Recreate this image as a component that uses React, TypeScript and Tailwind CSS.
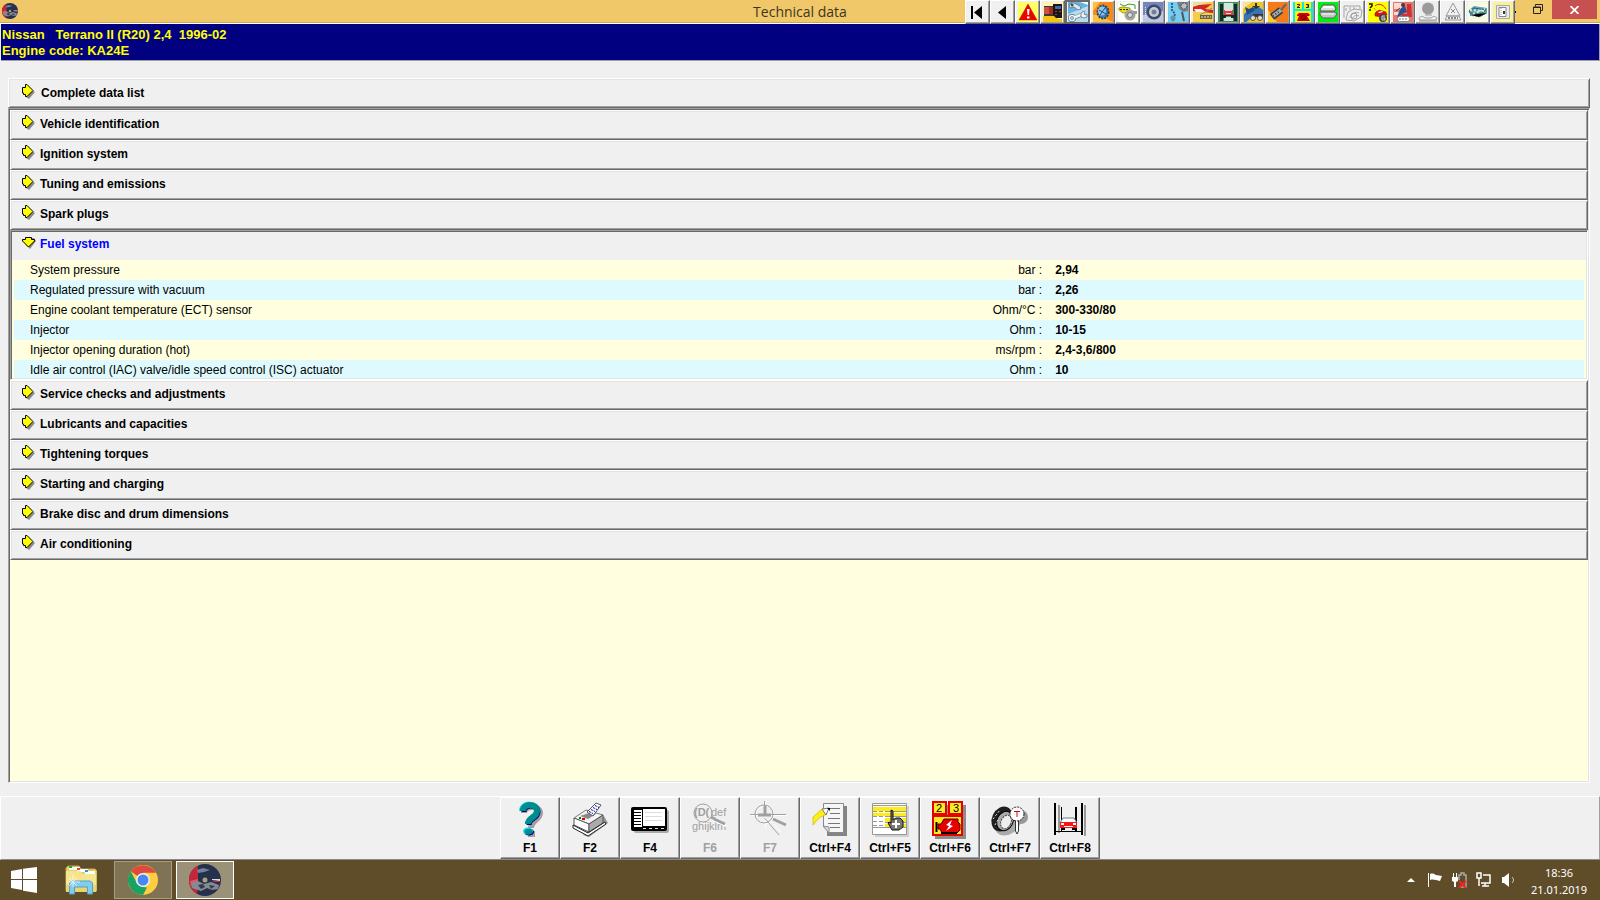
import { useState } from "react";
import type { ReactNode } from "react";

type ToolProps = { name: string; icon: ReactNode };
type ActionProps = { label: string; name: string; icon: ReactNode; disabled?: boolean };
type DataRow = { label: string; unit: string; value: string };

const sections = [
  "Vehicle identification",
  "Ignition system",
  "Tuning and emissions",
  "Spark plugs",
  "Fuel system",
  "Service checks and adjustments",
  "Lubricants and capacities",
  "Tightening torques",
  "Starting and charging",
  "Brake disc and drum dimensions",
  "Air conditioning",
];

const fuelRows: DataRow[] = [
  { label: "System pressure", unit: "bar :", value: "2,94" },
  { label: "Regulated pressure with vacuum", unit: "bar :", value: "2,26" },
  { label: "Engine coolant temperature (ECT) sensor", unit: "Ohm/°C :", value: "300-330/80" },
  { label: "Injector", unit: "Ohm :", value: "10-15" },
  { label: "Injector opening duration (hot)", unit: "ms/rpm :", value: "2,4-3,6/800" },
  { label: "Idle air control (IAC) valve/idle speed control (ISC) actuator", unit: "Ohm :", value: "10" },
];

// Two-pixel bevels: the border is the outer line, the inset shadow the inner one
const raised =
  "border border-t-white border-l-white border-r-[#696969] border-b-[#696969] p-px shadow-[inset_1px_1px_0_#e3e3e3,inset_-1px_-1px_0_#a0a0a0]";
const sunken =
  "border border-t-[#a0a0a0] border-l-[#a0a0a0] border-r-white border-b-white p-px shadow-[inset_1px_1px_0_#696969,inset_-1px_-1px_0_#e3e3e3]";

// 20x20 pictures for the buttons in the title bar
const tools: ToolProps[] = [
  { name: "First", icon: <path d="M3 4h2v13H3zM14 4v13L6 10.500z" /> },
  { name: "Previous", icon: <path d="M13 4v13L5 10.500z" /> },
  {
    name: "Warning",
    icon: (
      <>
        <path fill="#ffff66" d="M0 0h20v20H0z" />
        <path fill="#f00000" stroke="#a02000" strokeWidth=".5" d="M10 2l9 16H1z" />
        <path fill="#fff" d="M9 7h2.500l-.5 6H9.500zM9 14.500h2.500v2H9z" />
      </>
    ),
  },
  {
    name: "Diagnostic unit",
    icon: (
      <>
        <path fill="#fff3b0" d="M0 0h20v20H0z" />
        <path fill="#f6c416" d="M0 14h12l3 3h4v3H0z" />
        <path fill="#3a3a3a" d="M1 4h9v1H1zM1 12h10v2H1z" />
        <path fill="#a82c20" d="M1 5h9v7H1z" />
        <path fill="#d0503c" d="M1 5h5v7H1z" />
        <path fill="#16181c" d="M10 2h9v14h-6l-3-3z" />
        <path fill="#3a6cac" d="M12 4h6v3h-6z" />
        <path fill="#c23028" d="M12 9h2v1h-2zM16 9h2v1h-2zM12 12h2v1h-2z" />
      </>
    ),
  },
  {
    name: "Technical data",
    icon: (
      <>
        <path fill="#65b4e4" d="M0 0h20v20H0z" />
        <path fill="#b6ddf2" d="M0 20V12l20-8v16z" />
        <path fill="#f4fafc" d="M12 0h8v3z" />
        <path fill="#dfe8ea" stroke="#5d7480" strokeWidth=".8" d="M1 2l3-2 8 4 1 3-3 1-4-3-4 1z" />
        <path fill="#3f5661" d="M2 2l2-1 2 2-2 2z" />
        <path fill="none" stroke="#5d7480" strokeWidth="4" d="M5 16l8-3" />
        <circle cx="4" cy="16" r="2.500" fill="none" stroke="#5d7480" strokeWidth="3" />
        <circle cx="4" cy="16" r="2.500" fill="none" stroke="#eef3f4" strokeWidth="1.500" />
        <path fill="none" stroke="#eef3f4" strokeWidth="2.500" d="M6 15.500l8-3" />
        <path fill="#eef3f4" stroke="#5d7480" strokeWidth=".8" d="M13 11l3-2 1 1-1 2 1 1 2-1v3l-3 1-3-1z" />
      </>
    ),
  },
  {
    name: "Timing belts",
    icon: (
      <>
        <path fill="#f98c16" d="M0 0h20v20H0z" />
        <path fill="#ffc040" d="M0 0h7L0 9zM0 13h7l13 7H0z" />
        <ellipse cx="10" cy="10" rx="5.500" ry="6.500" fill="#3b7abc" stroke="#234669" strokeWidth="2" strokeDasharray="2 1" />
        <ellipse cx="9" cy="9" rx="4" ry="4.500" fill="#8ec4e6" />
        <path stroke="#234f84" d="M6 8l7 4M7 13l5-7" />
      </>
    ),
  },
  {
    name: "Engine management",
    icon: (
      <>
        <path fill="#fffff2" d="M0 0h20v20H0z" />
        <path fill="none" stroke="#389342" d="M2 2l4 2 5-2 6 1v4" />
        <path fill="#eee500" stroke="#77740a" strokeWidth=".7" d="M1 6l3-1 8 1v4l-7 1-4-3z" />
        <path stroke="#222" strokeDasharray="2 1" d="M2 7.500h9" />
        <circle cx="12" cy="13" r="5.500" fill="#a5a5a5" />
        <circle cx="12" cy="13" r="2.500" fill="#ddd" stroke="#777" />
        <path fill="#999" d="M15 9h4v3h-3z" />
      </>
    ),
  },
  {
    name: "Wheels",
    icon: (
      <>
        <path fill="#7486be" d="M0 0h20v20H0z" />
        <path fill="#bdc7e6" d="M0 13l20-4v11H0z" />
        <circle cx="11" cy="10" r="7.500" fill="#3e4a64" />
        <circle cx="11" cy="10" r="5" fill="#c7ccd6" />
        <circle cx="11" cy="10" r="2.500" fill="#747f99" />
        <path stroke="#e4e8ee" strokeDasharray="1 1" d="M2.500 5v12" />
      </>
    ),
  },
  {
    name: "Camshaft drive",
    icon: (
      <>
        <path fill="#77ccef" d="M0 0h20v20H0z" />
        <path fill="#777f86" d="M9 0h11v9l-5 1-4-3z" />
        <circle cx="16" cy="4" r="3" fill="#bac1c4" stroke="#475159" strokeDasharray="2 1" />
        <path fill="none" stroke="#2b6687" strokeWidth="2" strokeDasharray="2 1" d="M4 1v7l3 4-2 7" />
        <path fill="none" stroke="#4b565d" strokeWidth="2" d="M14 10l2 9" />
        <circle cx="5" cy="16" r="2.500" fill="#5d96ae" />
      </>
    ),
  },
  {
    name: "Repair times",
    icon: (
      <>
        <path fill="#f4ce48" d="M0 0h20v20H0z" />
        <path fill="#e7e19a" d="M0 0h14L5 4H0z" />
        <path fill="#d72226" d="M0 5l6-2 13-1-7 5 8 1v3L0 9z" />
        <path fill="#fff0e5" d="M1 7h7l5 3H3z" />
        <path fill="#646251" d="M7 13h12v4H7z" />
        <path stroke="#f5efac" strokeDasharray="2 1" d="M8 15h10" />
        <path stroke="#8f8e70" d="M7 13l12-7" />
      </>
    ),
  },
  {
    name: "Lifting points",
    icon: (
      <>
        <path fill="#3f9160" d="M0 0h20v20H0z" />
        <path fill="#cfeadd" d="M6 1h9v7H6zM6 15h9v4H6z" />
        <path fill="#1d282c" d="M2 2h3v17H2zM16 2h3v17h-3z" />
        <path fill="#e23d3a" d="M6 9h9v4H6z" />
        <path fill="#f3dad6" d="M7 7h7v2H7zM8 11h5v1H8z" />
        <path fill="#222" d="M5 13h11v1H5zM5 14h3v2H5zM13 14h3v2h-3z" />
      </>
    ),
  },
  {
    name: "Service schedules",
    icon: (
      <>
        <path fill="#edc728" d="M0 0h20v20H0z" />
        <path fill="#f8e48c" d="M0 0h9L0 7z" />
        <path fill="#3475b7" d="M1 12l8-6 7-1 4 3v6h-9L3 20H1z" />
        <path fill="#204d85" d="M2 5l4 2 4-2 2 3-8 5z" />
        <path fill="#333" d="M12 1h2v3h3L13 7 9 4h3zM10 12h10v3H10z" />
        <circle cx="10" cy="16" r="2.500" fill="#ddd" stroke="#555" />
        <circle cx="17" cy="16" r="2.500" fill="#ddd" stroke="#555" />
      </>
    ),
  },
  {
    name: "Key programming",
    icon: (
      <>
        <path fill="#f47b19" d="M0 0h20v20H0z" />
        <path fill="#ffca31" d="M0 8l9 12H0z" />
        <path stroke="#353c44" strokeWidth="7" d="M4 15l9-7" />
        <path stroke="#a9adac" strokeWidth="4" d="M5 14l8-6" />
        <path stroke="#5d6674" strokeWidth="2" d="M13 8l5-6" />
        <path stroke="#353c44" strokeWidth="2" strokeDasharray="1 2" d="M5 14l7-5" />
      </>
    ),
  },
  {
    name: "Fault codes",
    icon: (
      <>
        <path fill="#00f0f0" d="M0 0h20v20H0z" />
        <path fill="#ffef00" d="M2 0h7v7H2zM11 0h7v7h-7zM2 9h16v11H2z" />
        <path fill="none" stroke="#222" d="M4 2.500h2.500v1L4 5.500h3M13 2.500h2.500v3H13M14 4h1.500" />
        <path fill="#c80000" d="M4 13l2-2h9l2 2-1 1h-2l3 5H4l2-5H4z" />
        <circle cx="10.500" cy="15.500" r="2" fill="none" stroke="#5c0000" />
      </>
    ),
  },
  {
    name: "Car body",
    icon: (
      <>
        <path fill="#00ef10" d="M0 0h20v20H0z" />
        <path fill="#dedede" stroke="#565656" d="M5 3h11l2 4-2 2H3L2 7z" />
        <path fill="#fff" d="M6 4h9l1 2H5z" />
        <path fill="#c4c4c4" stroke="#606060" d="M2 10h15l2 2-3 4H5l-3-3z" />
        <path stroke="#fff" d="M4 12h12" />
      </>
    ),
  },
  {
    name: "Engine bay",
    icon: (
      <>
        <path fill="#f0f0f0" d="M0 0h20v20H0z" />
        <path fill="none" stroke="#a5a5a5" d="M1 4h16v3M1 4v12M3 6v3M7 5v3M11 5v3M3 17l2-7 6-3 8 1-1 7-7 4-8-1zM7 16c0-4 6-7 9-5M9 18c0-3 4-6 7-4" />
        <circle cx="11" cy="14" r="3" fill="none" stroke="#999" />
      </>
    ),
  },
  {
    name: "Troubleshooter",
    icon: (
      <>
        <path fill="#ffff00" d="M0 0h20v20H0z" />
        <path fill="none" stroke="#111" strokeWidth="1.500" d="M1 2h3v2L2 6M2 7v2" />
        <path fill="none" stroke="#c22" d="M7 4c3-3 8-2 11 3" />
        <path stroke="#777" strokeDasharray="1 1" d="M6 6l3 4" />
        <path fill="#df1111" stroke="#7a2200" strokeWidth=".5" d="M7 11l4-3 7 2 1 3-6 2-6-1z" />
        <path fill="#fff" d="M10 10l4-1 1 1-4 1z" />
        <circle cx="15" cy="16" r="4" fill="#444" />
        <path fill="none" stroke="#ddd" d="M17 14h-3v4h3v-2h-2" />
      </>
    ),
  },
  {
    name: "Airbags",
    icon: (
      <>
        <path fill="#e9756b" d="M0 0h20v20H0z" />
        <path fill="#fbd8d2" d="M1 1h8v6H1zM1 10h5v3H1z" />
        <path fill="#d33032" d="M14 2h4l1 13H9l-1-3h6z" />
        <path fill="#28548d" d="M8 6l4-2 2 6-5 2-3 3H4l2-5z" />
        <circle cx="10" cy="3" r="2" fill="#4c3c42" />
        <path stroke="#444" d="M3 9l4-3" />
        <rect x="4.500" y="14.500" width="12" height="5" rx="2" fill="#fff" stroke="#888" />
        <path stroke="#777" strokeDasharray="2 1" d="M6 17h9" />
      </>
    ),
  },
  {
    name: "Air conditioning",
    icon: (
      <>
        <path fill="#eee" d="M0 0h20v20H0z" />
        <circle cx="10" cy="6.500" r="6" fill="#9b9b9b" />
        <path stroke="#999" d="M7 13h7M1 19h18" />
        <path fill="#f5f5f5" stroke="#999" d="M1 17c0-3 4-3 6-1h6c2-2 6-2 6 1l-2 1H3z" />
      </>
    ),
  },
  {
    name: "ABS",
    icon: (
      <>
        <path fill="#f1f1f1" d="M0 0h20v20H0z" />
        <path fill="none" stroke="#999" d="M10 1l7 13H3zM2 18l2-4h12l2 4z" />
        <path stroke="#888" d="M8 7l4 4M12 7l-4 4" />
        <path stroke="#888" strokeWidth="2" strokeDasharray="2 1" d="M5 16h10" />
      </>
    ),
  },
  {
    name: "Electrical components",
    icon: (
      <>
        <path fill="#fafae2" d="M0 0h20v20H0z" />
        <path fill="#5ba6bd" d="M1 8l5-4 13 2v5l-7 4-10-2z" />
        <path fill="none" stroke="#286781" d="M1 9l5-3 12 2-6 4-10-1z" />
        <path stroke="#e8e6c0" strokeWidth="2" strokeDasharray="2 2" d="M2 8l15 1M5 12l12-5" />
        <path stroke="#286781" strokeDasharray="1 2" d="M2 13l9 2 8-4" />
      </>
    ),
  },
  {
    name: "Wiring diagrams",
    icon: (
      <>
        <path fill="#f9f29a" d="M0 0h20v20H0z" />
        <path fill="#e9e9e9" stroke="#aaa" d="M3.500 3.500h13v13h-13z" />
        <path fill="#fff" stroke="#888" d="M6 5.500h7v9H6z" />
        <path fill="#333" d="M10 9h2v3h-2z" />
        <path stroke="#999" strokeDasharray="1 1" d="M8 6v8" />
      </>
    ),
  },
];

// 58x44 pictures for the function-key bar
const actions: ActionProps[] = [
  {
    label: "F1",
    name: "Help",
    icon: (
      <>
        <g fill="none" stroke="#a0a0a0" strokeWidth="6">
          <path d="M23 15c0-8 16-8 16 0 0 7-9 7-9 15" />
          <path d="M27 36h7" />
        </g>
        <path fill="none" stroke="#00e8f0" strokeWidth="6" d="M21 13c0-9 15-8 15 0 0 7-9 6-9 13" />
        <path fill="none" stroke="#000080" strokeWidth="5" d="M23 14c0-8 14-8 14 0 0 7-9 6-9 13" />
        <path fill="none" stroke="#008c8c" strokeWidth="6" d="M22 13c0-8 14-8 14 0 0 7-9 6-9 13" />
        <ellipse cx="28" cy="34" rx="5" ry="3.500" fill="#000080" />
        <ellipse cx="27" cy="33" rx="5" ry="3.500" fill="#00e8f0" />
        <ellipse cx="27.500" cy="33.500" rx="4" ry="2.800" fill="#008c8c" />
      </>
    ),
  },
  {
    label: "F2",
    name: "Print",
    icon: (
      <>
        <path fill="#999" d="M22 37l6 2 19-14-4-7z" />
        <path fill="#f4f4f4" stroke="#777" d="M13 20l12-8 17 5-14 9z" />
        <path fill="#fff" stroke="#555" d="M13 20l15 6v8l-15-7z" />
        <path fill="#aaa" stroke="#555" d="M28 26l14-9v8l-14 9z" />
        <path fill="#fff" stroke="#222" d="M12 27l15 8 17-11 1 2-18 12-15-8z" />
        <path fill="#888" d="M19 18l8 3 8-5-4-2z" />
        <path fill="#fff" stroke="#555" d="M26 14l9-9 5 2-8 11z" />
        <path stroke="#0000c8" strokeDasharray="2 1" d="M34 7.500l4 2M32 9.500l4 2M30 11.500l4 2M28 13.500l4 2" />
        <path fill="#d00000" d="M21 20h3v2h-3z" />
        <path fill="#008000" d="M18 19h2v2h-2z" />
      </>
    ),
  },
  {
    label: "F4",
    name: "Screen",
    icon: (
      <>
        <rect x="13" y="12" width="35" height="23" rx="2" fill="#aaa" />
        <rect x="10" y="9" width="36" height="24" rx="2" />
        <path fill="#fff" d="M13 12h8v17h-8zM22 11h22v17H22z" />
        <path stroke="#000" d="M12 14.500h8M12 17.500h8M12 20.500h8M12 23.500h8M12 26.500h8" />
        <path stroke="#ddd" d="M24 14.500h17M24 18.500h17M24 22.500h17" />
        <path stroke="#ddd" strokeDasharray="3 3" d="M22 30.500h21" />
      </>
    ),
  },
  {
    label: "F6",
    name: "Search text",
    disabled: true,
    icon: (
      <>
        <g fill="#a0a0a0" className="font-['Liberation_Sans',Arial,sans-serif] text-[11px] font-normal">
          <text x="13" y="18" fontWeight="bold">(D(</text>
          <text x="30" y="18">def</text>
          <text x="11" y="32">ghijklm</text>
        </g>
        <circle cx="22" cy="15" r="9" fill="none" stroke="#a0a0a0" />
        <path stroke="#fff" strokeWidth="2" d="M32 22l13 6" />
        <path stroke="#a0a0a0" strokeWidth="3" d="M30 19l4 2M33 21l11 5" />
      </>
    ),
  },
  {
    label: "F7",
    name: "Locate",
    disabled: true,
    icon: (
      <>
        <g fill="none" stroke="#fff">
          <path d="M10 17.500h36M24.500 4v26M33 26l7 8" />
          <circle cx="24" cy="17" r="9" />
        </g>
        <g fill="none" stroke="#a0a0a0">
          <path d="M9 16.500h36M23.500 3v14M23.500 20L38 37" />
          <circle cx="23" cy="16" r="9" />
          <path strokeWidth="3" d="M17 17h13M24 8v9M32 21l13 6" />
        </g>
      </>
    ),
  },
  {
    label: "Ctrl+F4",
    name: "Notes",
    icon: (
      <>
        <path fill="#848484" d="M26 8h20v30H26z" />
        <path fill="#f6f6f6" stroke="#888" d="M22.500 5.500h20v29h-14l-6-6z" />
        <path stroke="#777" d="M29 10.500h10M29 15.500h10M27 20.500h12M27 25.500h12M29 29.500h10" />
        <path fill="#ddd" stroke="#888" d="M22 28l6 1v6z" />
        <path fill="#ffef10" stroke="#a7a000" strokeWidth=".5" d="M12 19l9-8 5 5-8 4-6 7z" />
        <path fill="#fff" stroke="#777" d="M21 11l7-1-3 7z" />
        <path d="M26 10h3v3z" />
      </>
    ),
  },
  {
    label: "Ctrl+F5",
    name: "Select row",
    icon: (
      <>
        <path fill="#888" d="M14 8h34v31H14z" opacity=".3" />
        <path fill="#fff" stroke="#999" d="M11.500 5.500h34v31h-34z" />
        <path fill="#ffec16" d="M12 9h33v4H12zM12 15h33v3H12zM24 20h21v4H24zM24 26h21v3H24z" />
        <path stroke="#999" d="M12 7.500h33M24 13.500h21M24 18.500h21M24 24.500h21M12 29.500h33" />
        <path stroke="#999" strokeDasharray="4 2" d="M12 13.500h12M12 18.500h12M12 23.500h12M12 27.500h12" />
        <path fill="#777" stroke="#111" d="M30 12l2 1v9l3-2h4l3 3v6l-4 3h-7l-4-7 1-1 2 1V13z" />
        <path stroke="#fff" strokeWidth="2" d="M31 26h8M35 22v8" />
      </>
    ),
  },
  {
    label: "Ctrl+F6",
    name: "Fault codes",
    icon: (
      <>
        <path fill="#8c8c8c" d="M14 7h31v34H14z" />
        <g fill="#ffeb22" stroke="#e80000" strokeWidth="2">
          <path d="M12 4h13v12H12zM28 4h13v12H28zM12 18h29v19H12z" />
        </g>
        <g className="font-['Liberation_Sans',Arial,sans-serif] text-[11px] font-normal">
          <text x="15" y="14">2</text>
          <text x="32" y="14">3</text>
        </g>
        <path fill="#e50000" stroke="#530000" d="M17 26h3l3-5h14v3l2 2v6l-3 3H21l-2-4h-2z" />
        <path stroke="#000" strokeWidth="2" d="M15.500 24v10M20 35h16" />
        <path fill="#fff" d="M31 22l-6 5 3 1-3 5 7-5-3-1z" />
      </>
    ),
  },
  {
    label: "Ctrl+F7",
    name: "Tightening torques",
    icon: (
      <>
        <ellipse cx="27" cy="26" rx="14" ry="10" fill="#aaa" transform="rotate(-35 27 26)" />
        <ellipse cx="21" cy="21" rx="10" ry="13" fill="#202020" transform="rotate(25 21 21)" />
        <ellipse cx="24" cy="23" rx="8" ry="10" fill="#aaa" stroke="#000" transform="rotate(25 24 23)" />
        <ellipse cx="25" cy="24" rx="5" ry="7" fill="#eee" stroke="#444" strokeDasharray="2 1" transform="rotate(25 25 24)" />
        <path stroke="#ddd" strokeDasharray="2 2" d="M12 21l7-9M14 27l4-7" />
        <circle cx="40" cy="19" r="7" fill="#999" />
        <path fill="#fff" stroke="#333" d="M34.500 22h3v11l-1.500 3-1.500-3z" />
        <circle cx="36" cy="16" r="7" fill="#fff" stroke="#222" strokeDasharray="2 1" />
        <path fill="none" stroke="#e00000" d="M33 13.500h6M36 13v6" />
      </>
    ),
  },
  {
    label: "Ctrl+F8",
    name: "Lifting points",
    icon: (
      <>
        <path fill="#999" d="M17 7h2v28h-2zM43 7h2v31h-2z" />
        <path d="M13 5h2v32h-2zM20 9h1v24h-1zM34 9h2v24h-2zM40 5h2v32h-2zM13 33h10v1H13zM34 33h8v1h-8z" />
        <path fill="#fff" stroke="#777" d="M22 20h11l3 5H19z" />
        <path fill="#f01818" d="M19 24h17v6H19z" />
        <path fill="#fff" d="M20 25h3v2h-3zM32 25h3v2h-3zM23 28h9v1h-9z" />
        <path d="M20 30h4v2h-4zM31 30h4v2h-4zM19 33h17v1H19z" />
      </>
    ),
  },
];

function Arrow({ open = false }: { open?: boolean }) {
  return open ? (
    <svg width="14" height="15" viewBox="0 0 14 15" className="shrink-0">
      <path fill="#8a8a8a" d="M4 3h8l2 3-6 8-5-5z" />
      <path fill="#ffff00" stroke="#000" d="M3.500 2.500h6v2h3v1.500l-6 6-6-6v-1.500h3z" />
    </svg>
  ) : (
    <svg width="14" height="15" viewBox="0 0 14 15" className="shrink-0">
      <path fill="#8a8a8a" d="M2 4h4l7 4-6 7-3-2z" />
      <path fill="#ffff00" stroke="#000" d="M.5 3.500h3v-3h1.500l6 6-6 6h-1.500v-2h-2v-1.500h-1z" />
    </svg>
  );
}

function DiscLogo({ className }: { className: string }) {
  return (
    <svg viewBox="0 0 32 32" className={className}>
      <circle cx="16" cy="16" r="16" fill="#25304d" />
      <path fill="#c2273a" d="M9 1.700A16 16 0 0 0 8 30l1-6V4z" />
      <path fill="#e05a62" d="M1 17l8-2v4l-7 3z" />
      <path fill="#74819c" d="M8 6l6-2 7 2-6 2-6 1z" />
      <path fill="#858b94" d="M2 19l7-2 6 3 7-2 8 3-1 4-6 1-5-2-6 3-9-3z" />
      <path fill="#353a44" d="M9 21l5-1 2 3-4 2zM20 21l6 1-4 3z" />
      <path fill="#d9dce2" d="M23 15h8v2l-8-1z" />
      <path fill="#c2273a" d="M24 17h7v1h-7z" />
      <circle cx="16" cy="16" r="2.500" fill="#aaa07f" />
    </svg>
  );
}

function ToolButton({ name, icon, active }: ToolProps & { active: boolean }) {
  return (
    <button
      aria-label={name}
      className={`flex h-6 w-[25px] items-center justify-center border bg-[#f0f0f0] ${
        active
          ? "border-[#696969] shadow-[inset_0_0_0_1px_#696969]"
          : "border-t-white border-l-white border-r-[#696969] border-b-[#696969] shadow-[inset_-1px_-1px_0_#a0a0a0]"
      }`}
    >
      <svg width="20" height="20" viewBox="0 0 20 20">
        {icon}
      </svg>
    </button>
  );
}

function TitleBar() {
  return (
    <header className="grid h-6 grid-cols-[1fr_auto_1fr] items-start border-b border-white bg-[#f0c869] shadow-[inset_0_-1px_0_#c9a95c]">
      <DiscLogo className="mt-[3px] ml-[2px] h-4 w-4" />
      <h1 className="font-['Open_Sans',sans-serif] text-[14px] leading-[23px] text-[#3c3620]">
        Technical data
      </h1>
      <div className="flex items-start justify-end">
        {tools.map((tool) => (
          <ToolButton key={tool.name} {...tool} active={tool.name === "Technical data"} />
        ))}
        <span className="mt-[11px] h-[2px] w-px bg-black" />
        <button aria-label="Restore" className="flex h-5 w-9 items-start justify-end pt-1 pr-[9px]">
          <svg width="10" height="10" viewBox="0 0 10 10" fill="none" stroke="#222">
            <path d="M2.500 2.500v-2h7v6h-2" />
            <path d="M.5 3h7v6.500h-7z" />
            <path d="M0 3.500h8" />
          </svg>
        </button>
        <button aria-label="Close" className="mr-[3px] flex h-[19px] w-[45px] items-center justify-center bg-[#c75050]">
          <svg width="9" height="8" viewBox="0 0 9 8" stroke="#fff" strokeWidth="1.700">
            <path d="M.5 0l8 8M8.500 0l-8 8" />
          </svg>
        </button>
      </div>
    </header>
  );
}

function FuelTable() {
  return (
    <div className="h-[118px] overflow-hidden bg-[#ffffdf] px-[2px]">
      <table className="w-full table-fixed border-collapse">
        <colgroup>
          <col className="w-1/2" />
          <col className="w-[16%]" />
          <col />
        </colgroup>
        <tbody>
          {fuelRows.map((row) => (
            <tr key={row.label} className="h-5 leading-5 whitespace-nowrap even:bg-[#dffaff]">
              <td className="p-0 pl-4">{row.label}</td>
              <td className="p-0 pr-2 text-right">{row.unit}</td>
              <td className="p-0 pl-[5px] font-bold">{row.value}</td>
            </tr>
          ))}
        </tbody>
      </table>
    </div>
  );
}

function Taskbar() {
  return (
    <footer className="flex h-10 shrink-0 items-center bg-[#5f4d29] text-white">
      <button aria-label="Start" className="ml-[11px]">
        <svg width="26" height="26" viewBox="0 0 26 26" fill="#fff">
          <path d="M0 4l11-2v10H0zM12 1.800L26 0v12H12zM0 13h11v10L0 21zM12 13h14v13l-14-2.200z" />
        </svg>
      </button>
      <button aria-label="File Explorer" className="ml-7">
        <svg width="32" height="30" viewBox="0 0 32 30">
          <path fill="#e7cf6d" stroke="#c4a94a" d="M1 3l2-2h11l2 3h14l2 2v20H1z" />
          <path fill="#fff" d="M4 2h11v3H4zM12 4h11v3H12zM20 6h10v3H20z" />
          <path fill="#18b23b" d="M4 1h3v2H4z" />
          <path fill="#d2482d" d="M12 3h3v2h-3z" />
          <path fill="#2795e5" d="M20 5h3v2h-3z" />
          <path fill="#f6e58f" d="M1 6h14l2 3h14v18H1z" />
          <path fill="#edd36d" d="M1 20h30v7H1z" />
          <path fill="#82cdee" stroke="#4ba4cf" d="M4.500 18l2-2h19l2 2v11h-5v-7h-13v7h-5z" />
          <path stroke="#fff" d="M8 10v12M2 17h13M4 13l8 8M12 13l-8 8" opacity=".7" />
        </svg>
      </button>
      <button aria-label="Google Chrome" className="ml-[17px] flex h-[38px] w-[58px] items-center justify-center border border-[#a79c85] bg-[#807354]">
        <svg width="30" height="30" viewBox="0 0 30 30">
          <circle cx="15" cy="15" r="15" fill="#ffcd40" />
          <path fill="#dd4b3e" d="M15 15L2.800 6.300A15 15 0 0 1 28 7.800H15z" />
          <path fill="#1aa260" d="M15 30A15 15 0 0 1 2.800 6.300L9 18.500l6 3.500 4 .5z" />
          <circle cx="15" cy="15" r="7" fill="#f1f1f1" />
          <circle cx="15" cy="15" r="5.500" fill="#4688f4" />
        </svg>
      </button>
      <button aria-label="Technical data" className="ml-1 flex h-[38px] w-[58px] items-center justify-center border border-white bg-[#9b9078]">
        <DiscLogo className="h-8 w-8" />
      </button>

      <div className="ml-auto flex items-center">
        <button aria-label="Show hidden icons" className="mr-3">
          <svg width="8" height="4" viewBox="0 0 8 4" fill="#fff">
            <path d="M4 0l4 4H0z" />
          </svg>
        </button>
        <svg width="16" height="16" viewBox="0 0 16 16" className="mr-2">
          <path fill="#fff" d="M1 1h1v14H1zM3 2c3-1 4 0 6 1l6 1-2 5-4-1C7 8 6 7 3 8z" />
        </svg>
        <svg width="17" height="16" viewBox="0 0 17 16" className="mr-2">
          <path fill="none" stroke="#aaa" strokeWidth="1.500" d="M8 8V3h2V1h3v2h2v12H9" />
          <path fill="#fff" d="M2 1h1v4h2V1h1v4h1v4L5 10v5H3v-5L1 9V5h1z" />
          <path stroke="#ef2525" strokeWidth="2" d="M8 9l7 7M15 9l-7 7" />
        </svg>
        <svg width="16" height="16" viewBox="0 0 16 16" className="mr-[10px]">
          <path fill="none" stroke="#fff" strokeWidth="1.500" d="M7 3h7v8H5M9 11v3M6 14h7" />
          <path fill="none" stroke="#fff" strokeWidth="1.500" d="M1 1h4v5H1zM3 6v8" />
        </svg>
        <svg width="14" height="16" viewBox="0 0 14 16" className="mr-[14px]">
          <path fill="#fff" d="M0 5h2l5-4v14l-5-4H0z" />
          <path fill="none" stroke="#ccc" d="M10 5c2 2 2 4 0 6" />
        </svg>
        <time className="mr-3 w-[58px] pt-px text-center font-['Noto_Sans',sans-serif] text-[11px] leading-[17px]">
          <span className="block">18:36</span>
          <span className="block">21.01.2019</span>
        </time>
      </div>
    </footer>
  );
}

export default function App() {
  const [openSection, setOpenSection] = useState("Fuel system");

  return (
    <div className="flex min-h-screen flex-col bg-[#f0f0f0] font-['Liberation_Sans',Arial,sans-serif] text-[12px] text-black">
      <TitleBar />

      {/* Vehicle */}
      <div className="ml-px border-r border-b border-[#a0a0a0] bg-[#000080] pl-px text-[13px] leading-4 font-bold text-[#ffff00]">
        <p className="pt-[3px] whitespace-pre">{"Nissan   Terrano II (R20) 2,4  1996-02"}</p>
        <p className="pb-px">Engine code: KA24E</p>
      </div>

      <main className="flex flex-1 flex-col pt-[17px] pr-[10px] pb-[13px] pl-2">
        <div className={`shrink-0 ${raised}`}>
          <button className="flex h-[26px] w-full items-start gap-[5px] pl-3 font-bold">
            <span className="pt-1">
              <Arrow />
            </span>
            <span className="leading-[26px]">Complete data list</span>
          </button>
        </div>

        {/* Sections */}
        <div className={`flex-1 bg-[#ffffdf] ${sunken}`}>
          {sections.map((section) => {
            const open = section === openSection;
            return (
              <div key={section} className={`bg-[#f0f0f0] ${open ? sunken : raised}`}>
                <button
                  aria-expanded={open}
                  onClick={() => setOpenSection(open ? "" : section)}
                  className={`flex w-full items-start gap-1 pl-[10px] font-bold ${
                    open ? "h-7 text-[#0000ff]" : "h-[26px]"
                  }`}
                >
                  <span className="pt-[3px]">
                    <Arrow open={open} />
                  </span>
                  <span className="leading-6">{section}</span>
                </button>
                {open && section === "Fuel system" && <FuelTable />}
              </div>
            );
          })}
        </div>
      </main>

      {/* Function keys */}
      <nav className="flex h-16 shrink-0 justify-center border border-t-white border-r-[#a0a0a0] border-b-[#8a8a8a] border-l-white">
        {actions.map((action) => (
          <button
            key={action.label}
            disabled={action.disabled}
            title={action.name}
            className="flex w-[60px] flex-col items-center border border-t-white border-r-[#696969] border-b-[#696969] border-l-white font-bold shadow-[inset_-1px_-1px_0_#a0a0a0] disabled:text-[#a0a0a0]"
          >
            <svg width="58" height="44" viewBox="0 0 58 44">
              {action.icon}
            </svg>
            <span className="leading-3">{action.label}</span>
          </button>
        ))}
      </nav>

      <Taskbar />
    </div>
  );
}
